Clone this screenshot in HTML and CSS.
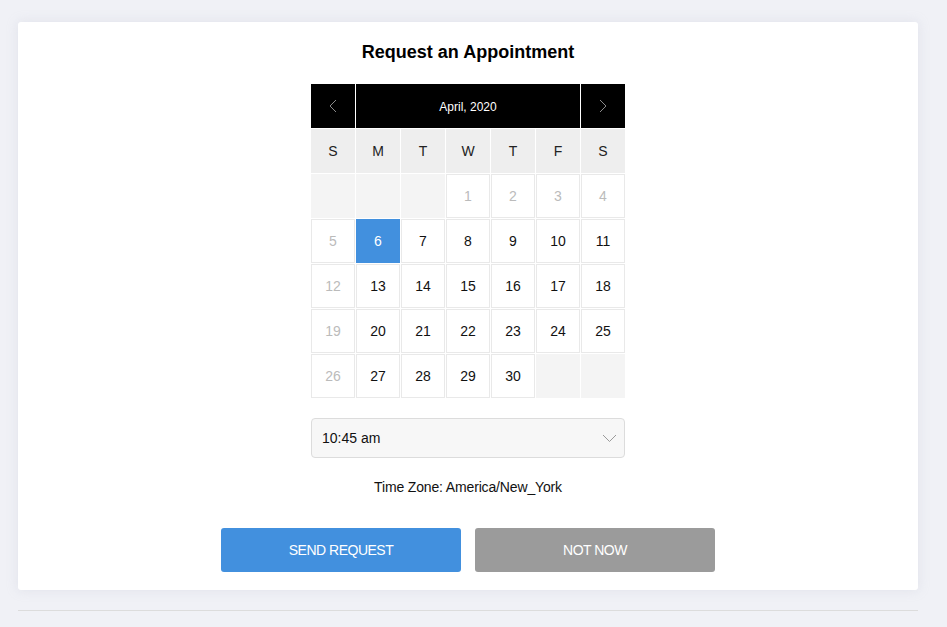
FILE: index.html
```html
<!DOCTYPE html>
<html>
<head>
<meta charset="utf-8">
<link rel="stylesheet" href="styles.css">
</head>
<body>
<div class="card">
  <h1 class="title">Request an Appointment</h1>
  <div class="cal">
    <div class="nav prev"><svg width="8" height="14" viewBox="0 0 8 14"><path d="M7 1 L1 7 L7 13" fill="none" stroke="#8a8a8a" stroke-width="1"/></svg></div>
    <div class="nav month">April, 2020</div>
    <div class="nav next"><svg width="8" height="14" viewBox="0 0 8 14"><path d="M1 1 L7 7 L1 13" fill="none" stroke="#8a8a8a" stroke-width="1"/></svg></div>
    <div class="dow">S</div><div class="dow">M</div><div class="dow">T</div><div class="dow">W</div><div class="dow">T</div><div class="dow">F</div><div class="dow">S</div>
    <div class="day empty"></div><div class="day empty"></div><div class="day empty"></div>
    <div class="day past">1</div><div class="day past">2</div><div class="day past">3</div><div class="day past">4</div>
    <div class="day past">5</div><div class="day sel">6</div><div class="day">7</div><div class="day">8</div><div class="day">9</div><div class="day">10</div><div class="day">11</div>
    <div class="day past">12</div><div class="day">13</div><div class="day">14</div><div class="day">15</div><div class="day">16</div><div class="day">17</div><div class="day">18</div>
    <div class="day past">19</div><div class="day">20</div><div class="day">21</div><div class="day">22</div><div class="day">23</div><div class="day">24</div><div class="day">25</div>
    <div class="day past">26</div><div class="day">27</div><div class="day">28</div><div class="day">29</div><div class="day">30</div><div class="day empty"></div><div class="day empty"></div>
  </div>
  <div class="select">
    <span>10:45 am</span>
    <svg width="15" height="9" viewBox="0 0 15 9"><path d="M1 1 L7.5 7.5 L14 1" fill="none" stroke="#9a9a9a" stroke-width="1"/></svg>
  </div>
  <div class="tz">Time Zone: America/New_York</div>
  <div class="buttons">
    <div class="btn send">SEND REQUEST</div>
    <div class="btn cancel">NOT NOW</div>
  </div>
</div>
<div class="rule"></div>
</body>
</html>
```
FILE: styles.css
```css
html, body {
  margin: 0;
  padding: 0;
}
body {
  background: #f0f1f6;
  font-family: "Liberation Sans", Arial, Helvetica, sans-serif;
  color: #111;
  padding: 22px 0 0 18px;
}
.card {
  width: 900px;
  height: 568px;
  box-sizing: border-box;
  background: #fff;
  border-radius: 3px;
  box-shadow: 0 0 12px rgba(180, 185, 205, 0.25);
  padding-top: 19px;
  display: flex;
  flex-direction: column;
  align-items: center;
}
.title {
  margin: 0;
  font-size: 18px;
  line-height: 22px;
  font-weight: bold;
  color: #000;
}
.cal {
  margin-top: 21px;
  display: grid;
  grid-template-columns: repeat(7, 44px);
  grid-auto-rows: 44px;
  gap: 1px;
  width: 314px;
}
.nav {
  background: #000;
  display: flex;
  align-items: center;
  justify-content: center;
}
.month {
  grid-column: span 5;
  color: #fff;
  font-size: 12px;
  padding-top: 1px;
}
.dow {
  background: #eeeeee;
  display: flex;
  align-items: center;
  justify-content: center;
  font-size: 14px;
  color: #222;
}
.day {
  box-sizing: border-box;
  border: 1px solid #e9e9e9;
  background: #fff;
  display: flex;
  align-items: center;
  justify-content: center;
  font-size: 14px;
  color: #111;
}
.day.empty {
  background: #f4f4f4;
  border-color: #f4f4f4;
}
.day.past {
  color: #bbb;
}
.day.sel {
  background: #4290de;
  border-color: #4290de;
  color: #fff;
}
.select {
  margin-top: 20px;
  width: 314px;
  height: 40px;
  box-sizing: border-box;
  border: 1px solid #dcdcdc;
  border-radius: 4px;
  background: #f7f7f7;
  display: flex;
  align-items: center;
  justify-content: space-between;
  padding: 0 7px 0 10px;
  font-size: 14px;
  color: #111;
}
.tz {
  margin-top: 19px;
  font-size: 14px;
  line-height: 20px;
  letter-spacing: -0.15px;
  color: #111;
}
.buttons {
  margin-top: 31px;
  display: flex;
  gap: 14px;
}
.btn {
  width: 240px;
  height: 44px;
  border-radius: 3px;
  display: flex;
  align-items: center;
  justify-content: center;
  color: #fff;
  font-size: 14px;
  letter-spacing: -0.5px;
}
.send {
  background: #4290de;
}
.cancel {
  background: #9b9b9b;
}
.rule {
  width: 900px;
  height: 1px;
  background: #dcdcdc;
  margin-top: 20px;
}
```
